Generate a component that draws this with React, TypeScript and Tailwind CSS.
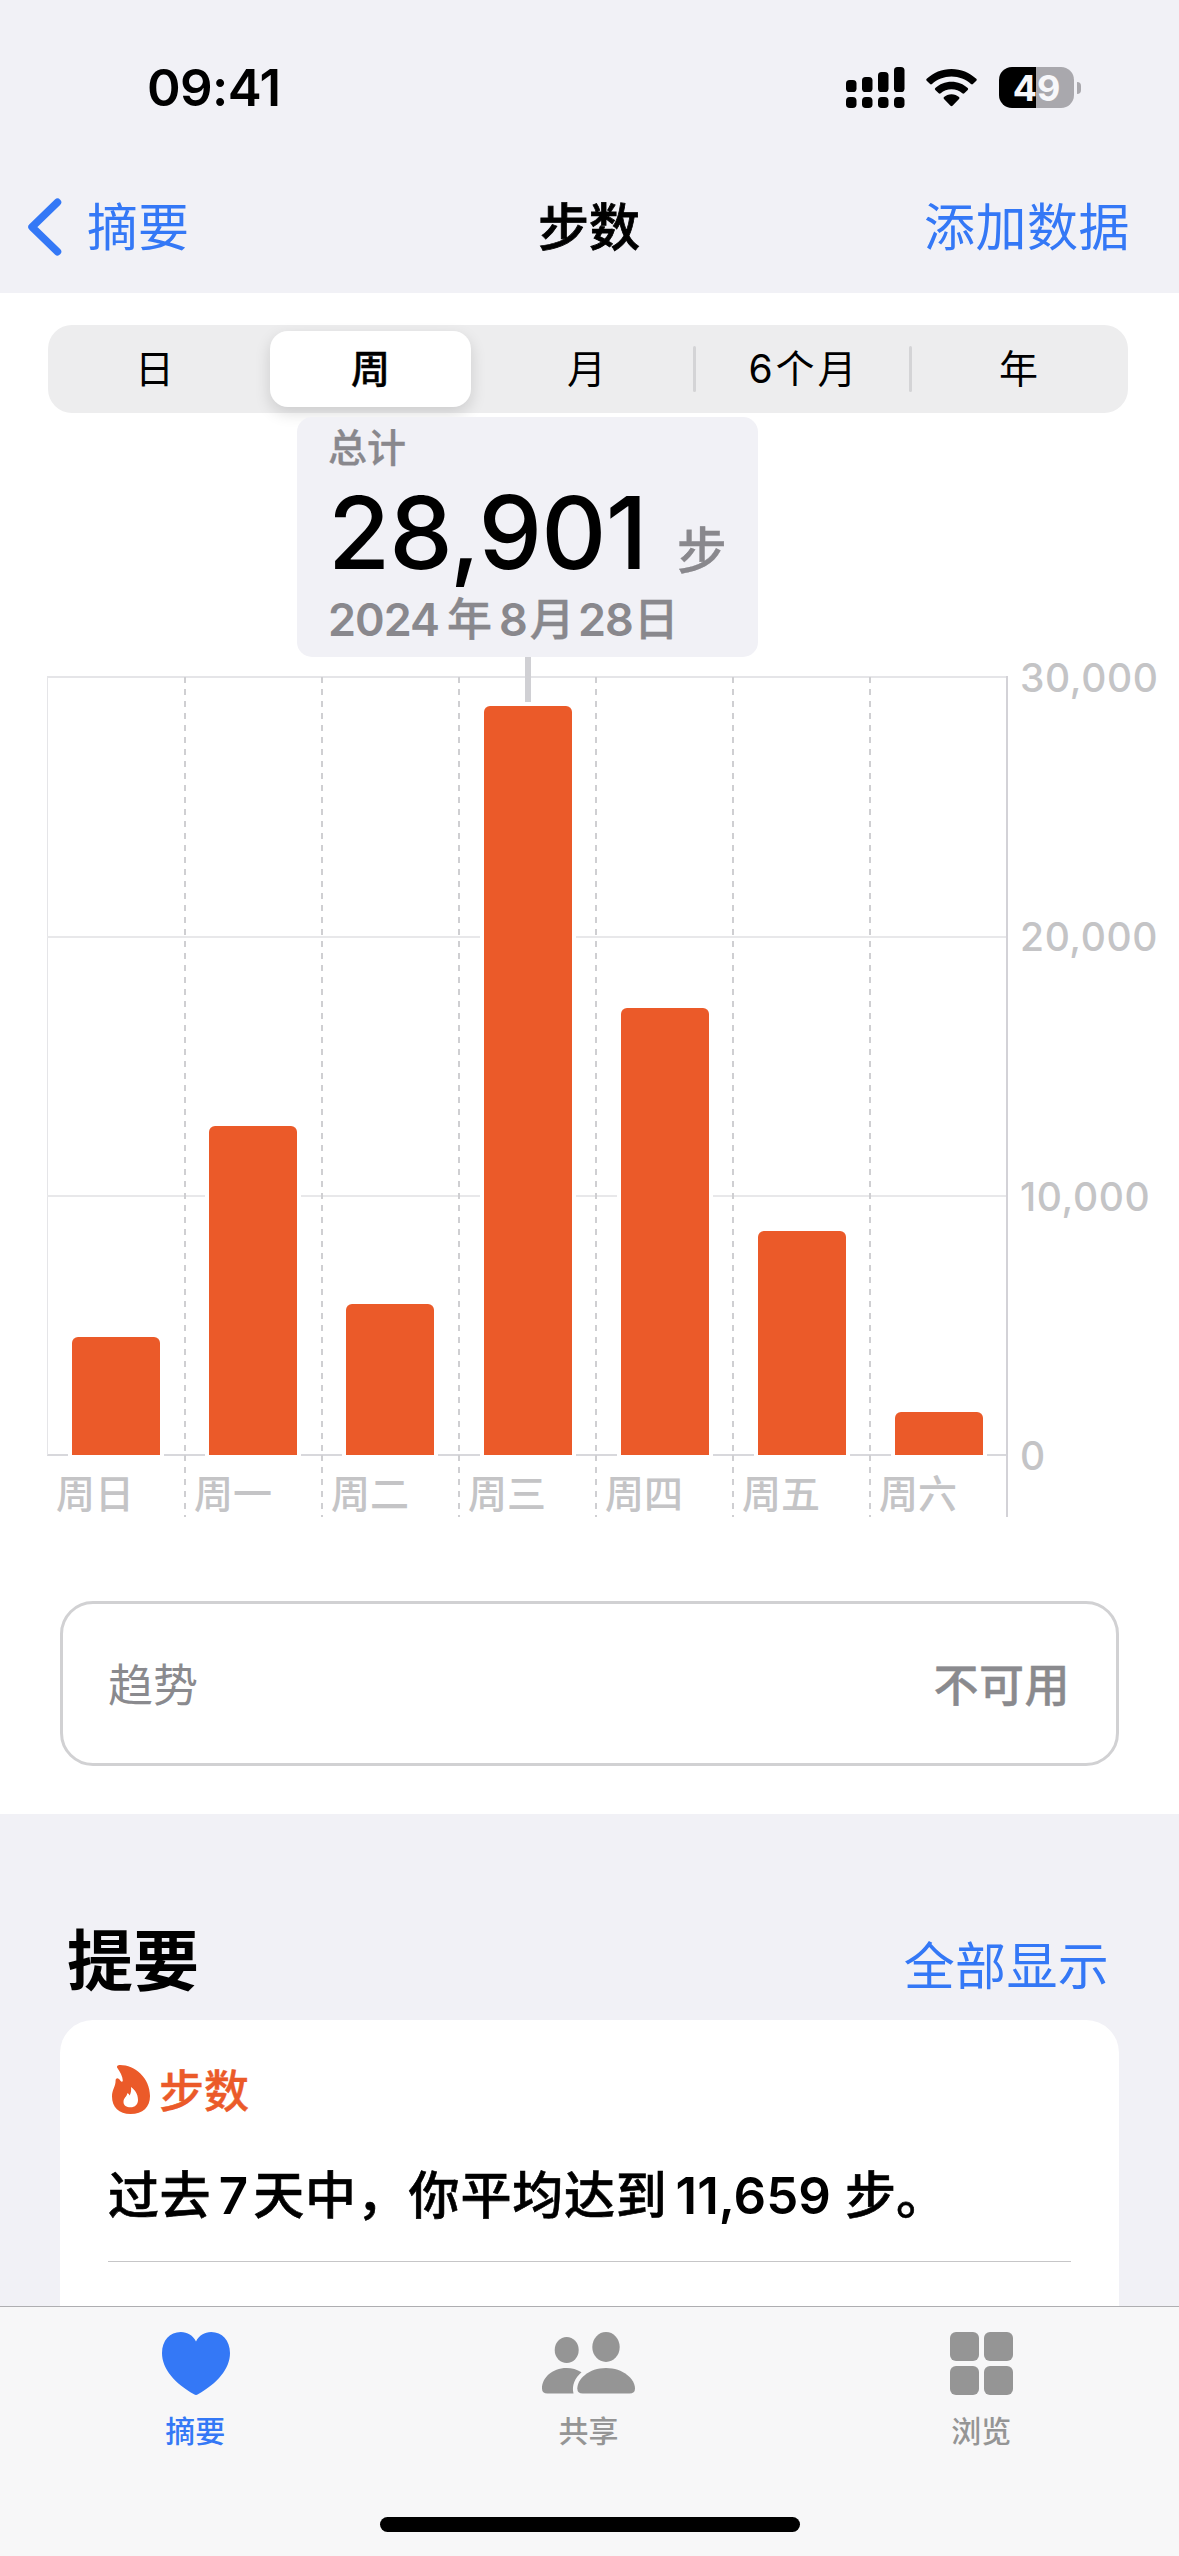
const DAILY_STEPS = [
    { day: "周日", height: 118 },
    { day: "周一", height: 329 },
    { day: "周二", height: 151 },
    { day: "周三", height: 749 },
    { day: "周四", height: 447 },
    { day: "周五", height: 224 },
    { day: "周六", height: 43 },
];

const RANGES = ["日", "周", "月", "6个月", "年"];

function StatusBar() {
    return (
        <div className="flex h-[160px] items-start justify-between pt-[56px] pl-[147px] pr-[98px]">
            <span className="text-[51px] leading-[64px] font-semibold tracking-[-0.6px]">09:41</span>
            <div className="flex items-center pt-[11px]">
                <svg className="h-[41px] w-[59px]" viewBox="0 0 59 41">
                    <rect x="0" y="13" width="10.5" height="12" rx="3.6" />
                    <rect x="16" y="10" width="10.5" height="15" rx="3.6" />
                    <rect x="32" y="5" width="10.5" height="20" rx="3.6" />
                    <rect x="48" y="0" width="10.5" height="25" rx="3.6" />
                    <rect x="0" y="30" width="10.5" height="11" rx="3.8" />
                    <rect x="16" y="30" width="10.5" height="11" rx="3.8" />
                    <rect x="32" y="30" width="10.5" height="11" rx="3.8" />
                    <rect x="48" y="30" width="10.5" height="11" rx="3.8" />
                </svg>
                <svg className="ml-[21px] h-[41px] w-[51px]" viewBox="0 0 51 41">
                    <path d="M25.5 1.9C35 1.9 43.7 5.6 50.3 11.7Q51.2 12.7 50.3 13.7L46.9 17.1Q46 17.9 45 17C39.8 12.3 33 9.5 25.5 9.5S11.2 12.3 6 17Q5 17.9 4.1 17.1L.7 13.7Q-.2 12.7 .7 11.7C7.3 5.6 16 1.9 25.5 1.9Z" />
                    <path d="M25.5 14.7C31.8 14.7 37.5 17 41.7 21Q42.7 22 41.7 23L38.3 26.3Q37.3 27.2 36.3 26.3C33.4 23.8 29.7 22.3 25.5 22.3S17.6 23.8 14.7 26.3Q13.7 27.2 12.7 26.3L9.3 23Q8.3 22 9.3 21C13.5 17 19.2 14.7 25.5 14.7Z" />
                    <path d="M25.5 27.3C28.4 27.3 31.1 28.4 33 30.1Q34 31.1 33 32.1L26.5 38.7Q25.5 39.6 24.5 38.7L18 32.1Q17 31.1 18 30.1C19.9 28.4 22.6 27.3 25.5 27.3Z" />
                </svg>
                <div className="ml-[22px] flex h-[41px] w-[75px] items-center justify-center rounded-[13px] bg-[linear-gradient(90deg,#000_49%,#a9a8ad_49%)]">
                    <span className="text-[36px] leading-none font-bold text-[#f7f7fa]">49</span>
                </div>
                <div className="ml-[3px] h-[12px] w-[4px] rounded-r-full bg-[#a9a8ad]" />
            </div>
        </div>
    );
}

function NavBar() {
    return (
        <div className="grid h-[133px] grid-cols-3 items-start pt-[37px] pl-[27px] pr-[50px] text-[51px] leading-[60px]">
            <div className="flex items-start text-[#3478f6]">
                <svg className="h-[60px] w-[36px]" viewBox="0 0 36 60" fill="none" stroke="currentColor" strokeWidth="7.5" strokeLinecap="round" strokeLinejoin="round">
                    <path d="M30.5 5.3L5 30l25.5 24.7" />
                </svg>
                <span className="mt-px ml-[24px]">摘要</span>
            </div>
            <h1 className="mt-px pl-[22px] text-center font-medium [-webkit-text-stroke:0.8px_#000]">步数</h1>
            <span className="mt-px -mr-px text-right tracking-[0.5px] text-[#3478f6]">添加数据</span>
        </div>
    );
}

function RangePicker() {
    return (
        <div className="ml-[48px] flex h-[88px] w-[1080px] items-center rounded-[24px] bg-[#ededee]">
            {RANGES.map((range, i) => (
                <div key={range} className="relative flex h-full w-[216px] items-center justify-center">
                    {i === 1 ? (
                        <div className="-ml-[3px] flex h-[76px] w-[201px] items-center justify-center rounded-[18px] bg-white text-[39px] font-medium shadow-[0_6px_16px_rgba(0,0,0,0.14)] [-webkit-text-stroke:0.4px_#000]">
                            {range}
                        </div>
                    ) : (
                        <span className="text-[39px] tracking-[3px]">{range}</span>
                    )}
                    {i > 2 && <div className="absolute top-[21px] left-[-3px] h-[46px] w-[3px] rounded-full bg-[#d4d4d6]" />}
                </div>
            ))}
        </div>
    );
}

function Callout() {
    return (
        <div className="relative z-10 mt-[4px] ml-[297px] h-[240px] w-[461px] rounded-[15px] bg-[#f1f1f6] pl-[31px] text-[#89888d]">
            <div className="pt-[10px] text-[39px] leading-[42px] font-medium [-webkit-text-stroke:0.3px_#89888d]">总计</div>
            <div className="mt-[15px] flex h-[96px] items-baseline">
                <span className="text-[101px] leading-[96px] font-medium tracking-[-0.9px] text-black">28,901</span>
                <span className="ml-[30px] text-[50px] leading-[60px] font-medium [-webkit-text-stroke:0.3px_#89888d]">步</span>
            </div>
            <div className="mt-[12px] flex text-[45px] leading-[56px]">
                <span className="font-semibold tracking-[-1px]">2024</span>
                <span className="ml-[8px] font-medium [-webkit-text-stroke:0.4px_#89888d]">年</span>
                <span className="ml-[7px] font-semibold tracking-[-1px]">8</span>
                <span className="ml-[3px] font-medium [-webkit-text-stroke:0.4px_#89888d]">月</span>
                <span className="ml-[3px] font-semibold tracking-[-1px]">28</span>
                <span className="ml-px font-medium [-webkit-text-stroke:0.4px_#89888d]">日</span>
            </div>
            <div className="absolute top-[240px] left-[228px] h-[45px] w-[6px] bg-[#d0d0d4]" />
        </div>
    );
}

function StepsChart() {
    return (
        <div className="mt-[19px] flex pl-[47px]">
            <div className="relative h-[841px] w-[961px] border-r-2 border-[#d3d2d7]">
                <div className="absolute top-0 left-0 h-[780px] w-full border-y-2 border-l border-[#e5e5e8] border-b-[#d8d8dc]" />
                <div className="absolute top-[260px] left-0 h-[2px] w-full bg-[#e8e8ea]" />
                <div className="absolute top-[519px] left-0 h-[2px] w-full bg-[#e8e8ea]" />
                <div className="relative flex h-full">
                    {DAILY_STEPS.map((item, i) => (
                        <div key={item.day} className="relative flex h-full w-[137px] flex-col">
                            {i > 0 && (
                                <>
                                    <div className="absolute top-px left-0 h-[777px] w-[2px] bg-[repeating-linear-gradient(180deg,#cfcfd2_0_6px,transparent_6px_12px)]" />
                                    <div className="absolute top-[779px] left-0 h-[62px] w-[2px] bg-[repeating-linear-gradient(180deg,#cfcfd2_0_6px,transparent_6px_12px)]" />
                                </>
                            )}
                            <div className={`flex h-[779px] shrink-0 items-end ${i > 2 ? "pl-[26px]" : "pl-[25px]"}`}>
                                <div className="w-[88px] rounded-t-[6px] bg-[#eb5a29] shadow-[0_-3px_0_4px_#fff]" style={{ height: item.height }} />
                            </div>
                            <span className={`relative pt-[14px] text-[39px] leading-[50px] font-medium text-[#c4c4c6] ${i > 0 ? "pl-[10px]" : "pl-[9px]"}`}>
                                {item.day}
                            </span>
                        </div>
                    ))}
                </div>
            </div>
            <div className="-mt-[23px] flex h-[828px] flex-col justify-between pl-[12px] text-[39px] leading-[50px] font-medium tracking-[0.6px] text-[#c4c4c6]">
                <span>30,000</span>
                <span>20,000</span>
                <span>10,000</span>
                <span>0</span>
            </div>
        </div>
    );
}

function Highlights() {
    return (
        <div className="flex h-[492px] flex-col overflow-hidden px-[60px]">
            <div className="flex h-[206px] shrink-0 justify-between pl-[7px] pr-[10px]">
                <h2 className="pt-[107px] text-[66px] leading-[80px] font-bold">提要</h2>
                <span className="pt-[123px] text-[51px] leading-[60px] tracking-[0.3px] text-[#3478f6]">全部显示</span>
            </div>
            <div className="h-[400px] shrink-0 rounded-t-[33px] bg-white px-[48px]">
                <div className="flex h-[128px] items-start pt-[45px] text-[#eb5a29]">
                    <svg className="ml-[4px] h-[49px] w-[38px]" viewBox="0 0 38 49" fill="currentColor">
                        <path fillRule="evenodd" d="M5.4 3C4.3 1.3 5.8 0 8 0C23 0 38 13 38 31C38 42 31 49 18.5 49C7 49 0 42 0 31.5C0 24.5 3.6 22 3.6 15.5C3.6 12.5 6.5 12 8.6 16C9.5 17 10.5 17.2 10.8 15.5C10.6 11 8 7 5.4 3ZM19 22C19.5 25.5 18.8 28 17.6 30.6C17 29 16.2 28.3 15.2 28.3C15 32 11.5 32.5 11.5 37C11.5 40.5 14.5 42.3 18.5 42.3C23 42.3 26 39.5 26 35C26 28.5 22.5 24.5 19 22Z" />
                    </svg>
                    <span className="mt-px ml-[9px] text-[45px] leading-[52px] font-medium [-webkit-text-stroke:0.4px_#eb5a29]">步数</span>
                </div>
                <div className="flex h-[114px] items-start border-b border-[#c6c6c8] pt-[18px] text-[51px] leading-[60px]">
                    <span className="font-medium tracking-[0.4px] [-webkit-text-stroke:0.6px_#000]">过去</span>
                    <span className="ml-[8px] font-semibold">7</span>
                    <span className="ml-[5px] font-medium tracking-[0.8px] [-webkit-text-stroke:0.6px_#000]">天中，你平均达到</span>
                    <span className="ml-[8px] font-semibold">11,659</span>
                    <span className="ml-[14px] font-medium [-webkit-text-stroke:0.6px_#000]">步。</span>
                </div>
            </div>
        </div>
    );
}

function TabBar() {
    return (
        <div className="flex h-[250px] flex-col border-t border-[#aeaeb1] bg-[#f7f7f8]">
            <div className="grid h-[210px] grid-cols-3 pr-[2px] text-[30px] leading-[40px] font-medium text-[#959595]">
                <div className="flex flex-col items-center pt-[25px] text-[#3478f6]">
                    <svg className="h-[63px] w-[68px]" viewBox="0 0 68 63" fill="currentColor">
                        <path d="M34 9.5C31 3.5 25.5 0 18.8 0C8 0 0 8.5 0 21C0 37 13 51.5 32 62.3Q34 63.5 36 62.3C55 51.5 68 37 68 21C68 8.5 60 0 49.2 0C42.5 0 37 3.5 34 9.5Z" />
                    </svg>
                    <span className="mt-[16px] mr-[2px]">摘要</span>
                </div>
                <div className="flex flex-col items-center pt-[25px]">
                    <svg className="h-[63px] w-[93px]" viewBox="0 0 93 63" fill="currentColor">
                        <ellipse cx="24.7" cy="18" rx="12" ry="13" />
                        <ellipse cx="64" cy="15" rx="13.7" ry="15" />
                        <path d="M39.5 40.3C35 37.5 30 36 24.5 36C10 36 0 46 0 56.5Q0 61.5 5.5 61.5H31.5C29.5 53.5 33 46 39.5 40.3Z" />
                        <path d="M64 36C47 36 35.3 47 35.3 56.5Q35.3 61.5 40.8 61.5H87.5Q93 61.5 93 56.5C93 47 81 36 64 36Z" />
                    </svg>
                    <span className="mt-[16px]">共享</span>
                </div>
                <div className="flex flex-col items-center pt-[25px] pl-px">
                    <div className="grid h-[63px] w-[63px] grid-cols-2 gap-[5px]">
                        <div className="rounded-[6px] bg-[#959595]" />
                        <div className="rounded-[6px] bg-[#959595]" />
                        <div className="rounded-[6px] bg-[#959595]" />
                        <div className="rounded-[6px] bg-[#959595]" />
                    </div>
                    <span className="mt-[16px]">浏览</span>
                </div>
            </div>
            <div className="mx-auto h-[15px] w-[420px] rounded-full bg-black" />
        </div>
    );
}

export default function App() {
    return (
        <div className="flex h-[2556px] w-[1179px] flex-col overflow-hidden bg-[#f1f1f6] font-[Inter,'Noto_Sans_CJK_SC',sans-serif] text-black">
            <StatusBar />
            <NavBar />
            <div className="h-[1521px] bg-white pt-[32px]">
                <RangePicker />
                <Callout />
                <StepsChart />
                <div className="mx-[60px] mt-[84px] flex h-[165px] items-center justify-between rounded-[33px] border-[3px] border-[#d1d1d3] pt-[4px] pl-[45px] pr-[46px] text-[45px] text-[#8a8a8e]">
                    <span>趋势</span>
                    <span className="font-medium tracking-[0.5px] [-webkit-text-stroke:0.4px_#8a8a8e]">不可用</span>
                </div>
            </div>
            <Highlights />
            <TabBar />
        </div>
    );
}
